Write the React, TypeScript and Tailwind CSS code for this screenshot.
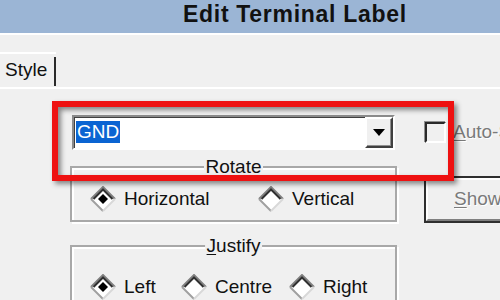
import React from "react";

function Diamond({ checked }: { checked?: boolean }) {
  return (
    <svg width="26" height="26" viewBox="0 0 26 26" className="shrink-0">
      <polygon points="13,1 25,13 13,25 1,13" fill="#ffffff" />
      <polyline points="1,13 13,1 25,13" fill="none" stroke="#808080" strokeWidth="2" />
      <polyline points="3.5,13 13,3.5 22.5,13" fill="none" stroke="#303030" strokeWidth="2" />
      <polyline points="1,13 13,25" fill="none" stroke="#a0a0a0" strokeWidth="2" />
      <polyline points="13,25 25,13" fill="none" stroke="#d8d8d8" strokeWidth="2" />
      {checked && <polygon points="13,8 18,13 13,18 8,13" fill="#000000" />}
    </svg>
  );
}

function Radio({ label, checked, width }: { label: string; checked?: boolean; width: string }) {
  return (
    <div className={`flex items-center gap-[8px] ${width}`}>
      <Diamond checked={checked} />
      <span>{label}</span>
    </div>
  );
}

export default function App() {
  return (
    <div className="relative w-[500px] h-[300px] overflow-hidden bg-[#f0f0f0] text-[19px] text-[#111] font-['Liberation_Sans',Arial,sans-serif]">
      {/* title bar */}
      <div className="h-[33px] bg-[#9bb5d5] pl-[183px] pt-[3px] text-[23px] leading-[23px] font-bold tracking-[0.7px] whitespace-nowrap">
        Edit Terminal Label
      </div>
      <div className="h-[2px] bg-white" />

      {/* tab strip */}
      <div className="mt-[17px] flex">
        <div className="h-[35px] w-[56px] border-t-2 border-white flex items-center pl-[5px] relative">
          Style
          <div className="absolute right-0 top-[3px] bottom-[1px] w-[2px] bg-[#2a2a2a]" />
        </div>
      </div>
      <div className="h-[2px] bg-white" />

      <div className="flex pt-[26px]">
        {/* left column */}
        <div className="ml-[70px] w-[327px]">
          <div className="ml-[2px] w-[323px] h-[35px] flex bg-white border-t-2 border-l-2 border-[#8a8a8a] border-b-2 border-r-2 border-b-white border-r-white shadow-[inset_1px_1px_0_#404040]">
            <div className="flex-1 pl-[2px] pt-[1px]">
              <span className="inline-block h-[22px] leading-[22px] bg-[#0a64d2] text-white px-[1px]">GND</span>
            </div>
            <div className="w-[28px] h-full bg-[#f0f0f0] flex items-center justify-center border-t-2 border-l-2 border-white border-b-2 border-r-2 border-b-[#404040] border-r-[#404040] shadow-[inset_-1px_-1px_0_#909090]">
              <svg width="12" height="7" viewBox="0 0 12 7">
                <polygon points="0,0 12,0 6,7" fill="#000" />
              </svg>
            </div>
          </div>

          {/* Rotate */}
          <div className="relative mt-[16px] h-[56px] border-2 border-[#a8a8a8] shadow-[inset_2px_2px_0_#fff,2px_2px_0_#fff]">
            <span className="absolute left-1/2 -translate-x-1/2 top-[-12px] bg-[#f0f0f0] px-[2px] leading-[22px]">Rotate</span>
            <div className="flex pl-[18px] pt-[17px]">
              <Radio label="Horizontal" checked width="w-[168px]" />
              <Radio label="Vertical" width="w-[120px]" />
            </div>
          </div>

          {/* Justify */}
          <div className="relative mt-[23px] h-[80px] border-2 border-[#a8a8a8] shadow-[inset_2px_2px_0_#fff,2px_2px_0_#fff]">
            <span className="absolute left-1/2 -translate-x-1/2 top-[-12px] bg-[#f0f0f0] px-[2px] leading-[22px]">
              <span className="underline underline-offset-2">J</span>ustify
            </span>
            <div className="flex pl-[18px] pt-[26px]">
              <Radio label="Left" checked width="w-[91px]" />
              <Radio label="Centre" width="w-[108px]" />
              <Radio label="Right" width="w-[90px]" />
            </div>
          </div>
        </div>

        {/* right column */}
        <div className="ml-[27px] flex-1 min-w-0">
          <div className="mt-[3px] ml-[1px] flex items-center gap-[7px] whitespace-nowrap">
            <div className="w-[21px] h-[21px] shrink-0 bg-[#f0f0f0] border-t-2 border-l-2 border-[#2a2a2a] border-b-2 border-r-2 border-b-white border-r-white shadow-[-1px_-1px_0_#909090]" />
            <span className="text-[#7a7a7a] [text-shadow:1px_1px_0_#fff]">
              <span className="underline underline-offset-2">A</span>uto-Size
            </span>
          </div>
          <div className="mt-[29px] w-[110px] h-[47px] border-2 border-[#2f2f2f] border-r-0">
            <div className="h-full flex items-center pl-[26px] border-t-2 border-l-2 border-white border-b-2 border-b-[#808080] text-[#7a7a7a] [text-shadow:1px_1px_0_#fff]">
              <span className="underline underline-offset-2">S</span>how
            </div>
          </div>
        </div>
      </div>

      {/* red highlight */}
      <div className="absolute left-[52px] top-[101px] w-[402px] h-[80px] border-[6px] border-[#ee1111] shadow-[3px_3px_5px_rgba(0,0,0,0.45),inset_3px_3px_5px_rgba(0,0,0,0.45)]" />
    </div>
  );
}
